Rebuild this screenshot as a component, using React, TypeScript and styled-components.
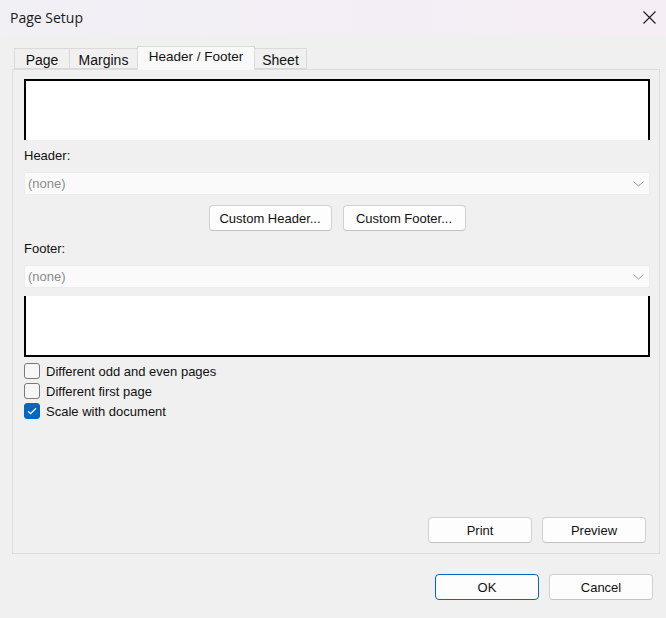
import React from "react";
import styled, { createGlobalStyle } from "styled-components";

const GlobalStyle = createGlobalStyle`
    html, body {
        margin: 0;
        padding: 0;
        background: #f0f0f0;
    }
    * {
        box-sizing: border-box;
    }
`;

const Window = styled.div`
    width: 666px;
    height: 618px;
    display: flex;
    flex-direction: column;
    background: #f0f0f0;
    font-family: "Liberation Sans", Arial, sans-serif;
    font-size: 13px;
    color: #1a1a1a;
`;

const TitleBar = styled.div`
    height: 34px;
    flex: none;
    display: flex;
    align-items: center;
    justify-content: space-between;
    padding: 0 7px 0 10px;
    background: linear-gradient(90deg, #f1f0f5 0%, #f3eef5 60%, #f5eef4 100%);

    .title {
        font-family: "Open Sans", "Noto Sans", sans-serif;
        font-size: 14px;
        color: #1b1b1b;
    }
`;

const CloseButton = styled.button`
    width: 20px;
    height: 20px;
    padding: 0;
    border: none;
    background: transparent;
    display: flex;
    align-items: center;
    justify-content: center;
`;

const Body = styled.div`
    flex: 1;
    display: flex;
    flex-direction: column;
    padding: 12px 13px 0 12px;
`;

const TabRow = styled.div`
    display: flex;
    align-items: flex-end;
    height: 23px;
    padding-left: 3px;
`;

const Tab = styled.div<{ $active?: boolean; $width: number }>`
    width: ${(p) => p.$width}px;
    height: ${(p) => (p.$active ? "24px" : "21px")};
    margin-bottom: ${(p) => (p.$active ? "-1px" : "0")};
    padding-top: ${(p) => (p.$active ? "2px" : "3px")};
    border: 1px solid #dadada;
    border-bottom: ${(p) => (p.$active ? "none" : "1px solid #dadada")};
    margin-left: -1px;
    background: ${(p) => (p.$active ? "#f9f9f9" : "#f0f0f0")};
    font-size: ${(p) => (p.$active ? "13.5px" : "14px")};
    text-align: center;
    color: #111;
    position: relative;
    z-index: ${(p) => (p.$active ? 2 : 1)};
    white-space: nowrap;
`;

const Panel = styled.div`
    width: 648px;
    height: 485px;
    border: 1px solid #dcdcdc;
    background: #f0f0f0;
    display: flex;
    flex-direction: column;
    padding: 9px 9px 10px 11px;
`;

const Preview = styled.div<{ $edge: "top" | "bottom" }>`
    height: 61px;
    background: #ffffff;
    border: 2px solid #000;
    ${(p) => (p.$edge === "top" ? "border-bottom: none;" : "border-top: none;")}
`;

const FieldLabel = styled.div<{ $top: number }>`
    margin-top: ${(p) => p.$top}px;
    height: 16px;
    line-height: 16px;
    color: #111;
`;

const Select = styled.div<{ $top: number }>`
    margin-top: ${(p) => p.$top}px;
    height: 23px;
    display: flex;
    align-items: center;
    justify-content: space-between;
    padding: 0 5px 0 3px;
    background: #fafafa;
    border: 1px solid #ececec;
    border-radius: 2px;
    color: #8c8c8c;

    svg {
        flex: none;
    }
`;

const Spacer = styled.div<{ $size: number }>`
    height: ${(p) => p.$size}px;
    flex: none;
`;

const CenterRow = styled.div`
    margin-top: 10px;
    display: flex;
    justify-content: center;
    gap: 11px;
`;

const Button = styled.button<{ $width: number; $primary?: boolean }>`
    width: ${(p) => p.$width}px;
    height: 26px;
    padding: 0;
    background: #fdfdfd;
    border: 1px solid ${(p) => (p.$primary ? "#0067c0" : "#d0d0d0")};
    border-bottom-color: ${(p) => (p.$primary ? "#0067c0" : "#c2c2c2")};
    border-radius: 4px;
    font-family: "Liberation Sans", Arial, sans-serif;
    font-size: 13px;
    color: #111;
`;

const CheckList = styled.div`
    margin-top: 4px;
    display: flex;
    flex-direction: column;
`;

const CheckRow = styled.label`
    height: 20px;
    display: flex;
    align-items: center;
    gap: 6px;
    color: #111;
`;

const Box = styled.span<{ $checked?: boolean }>`
    width: 16px;
    height: 16px;
    flex: none;
    border-radius: 3px;
    display: flex;
    align-items: center;
    justify-content: center;
    border: 1px solid ${(p) => (p.$checked ? "#0067c0" : "#7a7a7a")};
    background: ${(p) => (p.$checked ? "#0067c0" : "#f7f7f7")};
`;

const PanelActions = styled.div`
    margin-top: auto;
    display: flex;
    justify-content: flex-end;
    gap: 10px;
    padding-right: 4px;
`;

const DialogActions = styled.div`
    margin-top: 20px;
    display: flex;
    justify-content: flex-end;
    gap: 10px;
`;

const Chevron = () => (
    <svg width="11" height="6" viewBox="0 0 11 6">
        <path d="M0.5 0.5 L5.5 5 L10.5 0.5" fill="none" stroke="#9a9a9a" strokeWidth="1" />
    </svg>
);

const Check = () => (
    <svg width="10" height="8" viewBox="0 0 10 8">
        <path d="M1 4.2 L3.6 6.6 L9 1.2" fill="none" stroke="#ffffff" strokeWidth="1.3" />
    </svg>
);

const tabs = [
    { label: "Page", width: 56 },
    { label: "Margins", width: 69 },
    { label: "Header / Footer", width: 118 },
    { label: "Sheet", width: 53 },
];

const options = [
    { label: "Different odd and even pages", checked: false },
    { label: "Different first page", checked: false },
    { label: "Scale with document", checked: true },
];

const App = () => {
    return (
        <Window>
            <GlobalStyle />
            <TitleBar>
                <span className="title">Page Setup</span>
                <CloseButton aria-label="Close">
                    <svg width="13" height="13" viewBox="0 0 13 13">
                        <path d="M0.5 0.5 L12.5 12.5 M12.5 0.5 L0.5 12.5" stroke="#1a1a1a" strokeWidth="1.1" />
                    </svg>
                </CloseButton>
            </TitleBar>
            <Body>
                <TabRow>
                    {tabs.map((t) => (
                        <Tab key={t.label} $width={t.width} $active={t.label === "Header / Footer"}>
                            {t.label}
                        </Tab>
                    ))}
                </TabRow>
                <Panel>
                    <Preview $edge="top" />
                    <FieldLabel $top={8}>Header:</FieldLabel>
                    <Select $top={8}>
                        <span>(none)</span>
                        <Chevron />
                    </Select>
                    <CenterRow>
                        <Button $width={123}>Custom Header...</Button>
                        <Button $width={123}>Custom Footer...</Button>
                    </CenterRow>
                    <FieldLabel $top={10}>Footer:</FieldLabel>
                    <Select $top={8}>
                        <span>(none)</span>
                        <Chevron />
                    </Select>
                    <Spacer $size={8} />
                    <Preview $edge="bottom" />
                    <CheckList>
                        {options.map((o) => (
                            <CheckRow key={o.label}>
                                <Box $checked={o.checked}>{o.checked && <Check />}</Box>
                                {o.label}
                            </CheckRow>
                        ))}
                    </CheckList>
                    <PanelActions>
                        <Button $width={104}>Print</Button>
                        <Button $width={104}>Preview</Button>
                    </PanelActions>
                </Panel>
                <DialogActions>
                    <Button $width={104} $primary>OK</Button>
                    <Button $width={104}>Cancel</Button>
                </DialogActions>
            </Body>
        </Window>
    );
};

export default App;
